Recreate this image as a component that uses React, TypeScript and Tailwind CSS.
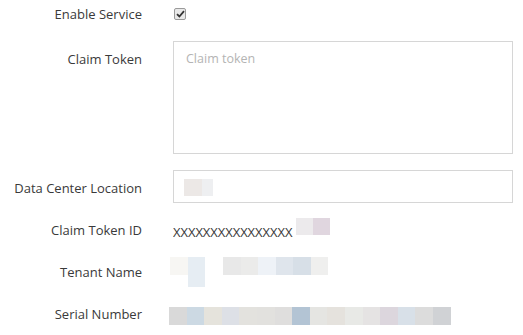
import React from "react";

const serial = [
  "#d9d9d9", "#ccd9e3", "#e5e3dc", "#dde0e6", "#e3e2de", "#e2e1de", "#dfdedd", "#b3c4d4",
  "#e5e5e2", "#e5e2dd", "#e8e9e6", "#e5e3e3", "#dcd6dd", "#d8e0e8", "#dcdcdc", "#d0d2d5",
];

const tenant = ["#e8e8e8", "#ebebea", "#eef2f7", "#dfe5ec", "#d7dfe7", "#efefee"];

function Label({ children, className = "" }: { children: React.ReactNode; className?: string }) {
  return (
    <div className={"w-[142px] shrink-0 text-right text-[13px] leading-[18px] text-[#3a3a3a] " + className}>
      {children}
    </div>
  );
}

export default function App() {
  return (
    <div
      className="w-[523px] h-[335px] bg-white overflow-hidden"
      style={{ fontFamily: '"Open Sans", "Liberation Sans", sans-serif' }}
    >
      <div className="flex items-center h-[28px]">
        <Label>Enable Service</Label>
        <div className="ml-[32px] w-[12px] h-[12px] rounded-[2px] border border-[#9a9a9a] bg-[#e9e9e9] flex items-center justify-center">
          <svg width="9" height="8" viewBox="0 0 9 8">
            <path d="M1 4.2 L3.4 6.5 L8 1.2" fill="none" stroke="#333" strokeWidth="1.8" />
          </svg>
        </div>
      </div>

      <div className="flex items-start mt-[13px]">
        <Label className="pt-[9px]">Claim Token</Label>
        <div className="ml-[31px] w-[340px] h-[113px] border border-[#d6d6d6] px-[12px] pt-[8px]">
          <div className="text-[12.5px] leading-[17px] text-[#b4b4b4]">Claim token</div>
        </div>
      </div>

      <div className="flex items-center mt-[16px]">
        <Label className="pt-[3px]">Data Center Location</Label>
        <div className="ml-[31px] w-[340px] h-[33px] border border-[#d6d6d6] flex items-center pl-[10px]">
          <div className="flex mt-[2px]">
            <div className="w-[18px] h-[17px] bg-[#ece8e6]" />
            <div className="w-[11px] h-[17px] bg-[#eeeff1]" />
          </div>
        </div>
      </div>

      <div className="flex items-center h-[34px] mt-[10px]">
        <Label>Claim Token ID</Label>
        <div className="ml-[31px] flex items-center">
          <span className="text-[13px] leading-[18px] text-[#3a3a3a] tracking-[-0.05px] mt-[4px] w-[123px] overflow-hidden whitespace-nowrap">
            XXXXXXXXXXXXXXXX
          </span>
          <div className="flex -mt-[8px]">
            <div className="w-[17px] h-[17px] bg-[#eceaec]" />
            <div className="w-[17px] h-[17px] bg-[#e0d6df]" />
          </div>
        </div>
      </div>

      <div className="flex items-center h-[34px] mt-[8px]">
        <Label>Tenant Name</Label>
        <div className="ml-[28px] flex items-start self-start mt-[2px]">
          <div className="w-[18px] h-[18px] bg-[#f7f6f3]" />
          <div className="w-[17px] h-[30px] bg-[#e6edf3]" />
          <div className="flex ml-[18px]">
            {tenant.map((c, i) => (
              <div key={i} className="w-[17.5px] h-[18px]" style={{ backgroundColor: c }} />
            ))}
          </div>
        </div>
      </div>

      <div className="flex items-center h-[34px] mt-[8px]">
        <Label>Serial Number</Label>
        <div className="ml-[27px] flex mt-[4px]">
          {serial.map((c, i) => (
            <div key={i} className="w-[17.6px] h-[18px]" style={{ backgroundColor: c }} />
          ))}
        </div>
      </div>
    </div>
  );
}
